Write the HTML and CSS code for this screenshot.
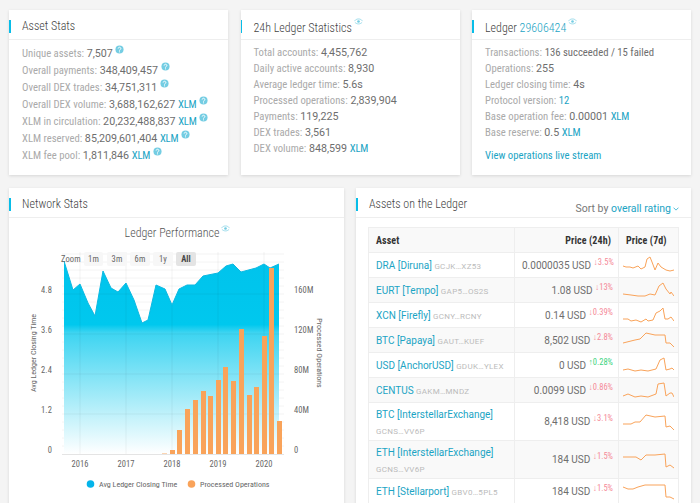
FILE: index.html
```html
<!DOCTYPE html>
<html lang="en">
<head>
<meta charset="utf-8">
<title>Stellar network dashboard</title>
<link rel="stylesheet" href="styles.css">
</head>
<body>
<svg class="defs" width="0" height="0" aria-hidden="true">
  <symbol id="help" viewBox="0 0 10 10"><circle cx="5" cy="5" r="4.5" fill="#74cde3"/><path d="M3.5 3.9a1.5 1.4 0 1 1 2.3 1.2c-.5.3-.8.5-.8 1.1" fill="none" stroke="#fff" stroke-width="1.1"/><circle cx="5" cy="7.6" r=".65" fill="#fff"/></symbol>
  <symbol id="watch" viewBox="0 0 10 8"><path d="M.6 3.2C2.8.4 7.2.4 9.4 3.2" fill="none" stroke="#74cde3" stroke-width=".8"/><path d="M.8 4.8C3 7.4 7 7.4 9.2 4.8" fill="none" stroke="#74cde3" stroke-width=".8"/><circle cx="5" cy="4" r="1.5" fill="#74cde3"/></symbol>
</svg>
<main class="page">
  <section class="top-row">
    <article class="card">
      <h2 class="card-title">Asset Stats</h2>
      <ul class="stats">
        <li><span class="lbl">Unique assets:</span> 7,507 <svg class="help"><use href="#help"/></svg></li>
        <li><span class="lbl">Overall payments:</span> 348,409,457 <svg class="help"><use href="#help"/></svg></li>
        <li><span class="lbl">Overall DEX trades:</span> 34,751,311 <svg class="help"><use href="#help"/></svg></li>
        <li><span class="lbl">Overall DEX volume:</span> 3,688,162,627 <a class="link">XLM</a> <svg class="help"><use href="#help"/></svg></li>
        <li><span class="lbl">XLM in circulation:</span> 20,232,488,837 <a class="link">XLM</a> <svg class="help"><use href="#help"/></svg></li>
        <li><span class="lbl">XLM reserved:</span> 85,209,601,404 <a class="link">XLM</a> <svg class="help"><use href="#help"/></svg></li>
        <li><span class="lbl">XLM fee pool:</span> 1,811,846 <a class="link">XLM</a> <svg class="help"><use href="#help"/></svg></li>
      </ul>
    </article>
    <article class="card">
      <h2 class="card-title">24h Ledger Statistics<svg class="watch"><use href="#watch"/></svg></h2>
      <ul class="stats">
        <li><span class="lbl">Total accounts:</span> 4,455,762</li>
        <li><span class="lbl">Daily active accounts:</span> 8,930</li>
        <li><span class="lbl">Average ledger time:</span> 5.6s</li>
        <li><span class="lbl">Processed operations:</span> 2,839,904</li>
        <li><span class="lbl">Payments:</span> 119,225</li>
        <li><span class="lbl">DEX trades:</span> 3,561</li>
        <li><span class="lbl">DEX volume:</span> 848,599 <a class="link">XLM</a></li>
      </ul>
    </article>
    <article class="card">
      <h2 class="card-title">Ledger <a class="link">29606424</a><svg class="watch"><use href="#watch"/></svg></h2>
      <ul class="stats">
        <li><span class="lbl">Transactions:</span> <span class="narrow">136 succeeded / 15 failed</span></li>
        <li><span class="lbl">Operations:</span> 255</li>
        <li><span class="lbl">Ledger closing time:</span> 4s</li>
        <li><span class="lbl">Protocol version:</span> <a class="link">12</a></li>
        <li><span class="lbl">Base operation fee:</span> 0.00001 <a class="link">XLM</a></li>
        <li><span class="lbl">Base reserve:</span> 0.5 <a class="link">XLM</a></li>
      </ul>
      <a class="link live">View operations live stream</a>
    </article>
  </section>
  <section class="bottom-row">
    <article class="card tall">
      <h2 class="card-title">Network Stats</h2>
      <svg class="chart" viewBox="9 218 335 285" width="335" height="285">
        <defs>
          <linearGradient id="area" gradientUnits="userSpaceOnUse" x1="0" y1="258" x2="0" y2="454">
            <stop offset="0" stop-color="#00c3ec"/><stop offset=".34" stop-color="#00c8ee"/><stop offset=".38" stop-color="#3cd4f1"/><stop offset="1" stop-color="#fff"/>
          </linearGradient>
        </defs>
        <text class="chart-title" x="172" y="237" text-anchor="middle">Ledger Performance</text>
        <use href="#watch" x="221" y="225" width="9" height="7"/>
        <path class="grid-minor" d="M62 262H284M62 270H284M62 278H284M62 286H284M62 302H284M62 310H284M62 318H284M62 326H284M62 342H284M62 350H284M62 358H284M62 366H284M62 382H284M62 390H284M62 398H284M62 406H284M62 422H284M62 430H284M62 438H284M62 446H284"/>
        <path class="area" d="M64 454V261L73 290 80 284 88 303 95 316 103 271 111 288 118 292 126 283 134 300 142 323 148 320 156 285 165 289 172 305 179 289 187 285 195 285 203 276 218 273 226 266 233 264 241 272 256 268 264 264 270 268 279 264V454Z"/>
        <path class="grid-major" d="M62 254H284M62 294H284M62 334H284M62 374H284M62 414H284M80 252V454M126 252V454M172 252V454M218 252V454M264 252V454"/>
        <path class="area-line" d="M64 261L73 290 80 284 88 303 95 316 103 271 111 288 118 292 126 283 134 300 142 323 148 320 156 285 165 289 172 305 179 289 187 285 195 285 203 276 218 273 226 266 233 264 241 272 256 268 264 264 270 268 279 264"/>
        <path class="baseline" d="M62 454.5H284"/>
        <g class="bars">
          <rect class="faint" x="162" y="453" width="5" height="1"/>
          <rect x="170" y="450" width="5" height="4"/>
          <rect x="177" y="430" width="5" height="24"/>
          <rect x="185" y="409" width="5" height="45"/>
          <rect x="193" y="400" width="5" height="54"/>
          <rect x="201" y="391" width="5" height="63"/>
          <rect x="208" y="396" width="5" height="58"/>
          <rect x="216" y="380" width="5" height="74"/>
          <rect x="223" y="367" width="5" height="87"/>
          <rect x="231" y="381" width="5" height="73"/>
          <rect x="239" y="329" width="5" height="125"/>
          <rect x="247" y="395" width="5" height="59"/>
          <rect x="254" y="387" width="5" height="67"/>
          <rect x="262" y="336" width="5" height="118"/>
          <rect x="269" y="268" width="5" height="186"/>
          <rect x="277" y="421" width="5" height="33"/>
        </g>
        <g class="zoom">
          <text class="axis" x="61" y="262">Zoom</text>
          <rect x="84" y="252" width="19" height="14" rx="2"/>
          <rect x="107" y="252" width="20" height="14" rx="2"/>
          <rect x="130" y="252" width="20" height="14" rx="2"/>
          <rect x="153" y="252" width="20" height="14" rx="2"/>
          <rect class="on" x="176" y="252" width="20" height="14" rx="2"/>
          <text class="axis" x="93.500" y="262" text-anchor="middle">1m</text>
          <text class="axis" x="117" y="262" text-anchor="middle">3m</text>
          <text class="axis" x="140" y="262" text-anchor="middle">6m</text>
          <text class="axis" x="163" y="262" text-anchor="middle">1y</text>
          <text class="axis bold" x="186" y="262" text-anchor="middle">All</text>
        </g>
        <g class="axis">
          <text x="52" y="292.500" text-anchor="end">4.8</text>
          <text x="52" y="332.500" text-anchor="end">3.6</text>
          <text x="52" y="372.500" text-anchor="end">2.4</text>
          <text x="52" y="412.500" text-anchor="end">1.2</text>
          <text x="52" y="453" text-anchor="end">0</text>
          <text x="294" y="292.500">160M</text>
          <text x="294" y="332.500">120M</text>
          <text x="294" y="372.500">80M</text>
          <text x="294" y="412.500">40M</text>
          <text x="294" y="453">0</text>
          <text x="80" y="467" text-anchor="middle">2016</text>
          <text x="126" y="467" text-anchor="middle">2017</text>
          <text x="172" y="467" text-anchor="middle">2018</text>
          <text x="218" y="467" text-anchor="middle">2019</text>
          <text x="264" y="467" text-anchor="middle">2020</text>
        </g>
        <g class="legend">
          <text transform="translate(36 353) rotate(-90)" text-anchor="middle">Avg Ledger Closing Time</text>
          <text transform="translate(317 353) rotate(90)" text-anchor="middle">Processed Operations</text>
          <circle cx="90.500" cy="484" r="3.800" fill="#04b4ea"/>
          <text x="99" y="487">Avg Ledger Closing Time</text>
          <circle cx="191.500" cy="484" r="3.800" fill="#f9a35a"/>
          <text x="200" y="487">Processed Operations</text>
        </g>
      </svg>
    </article>
    <article class="card tall">
      <div class="head-wrap">
        <h2 class="card-title">Assets on the Ledger</h2>
        <p class="sort">Sort by <a class="link">overall rating</a><svg class="chev" viewBox="0 0 8 5" width="6" height="4"><path d="M.7.7 4 4 7.300.7" fill="none" stroke="#19a8c9"/></svg></p>
      </div>
      <table class="assets">
        <thead>
          <tr><th class="c1">Asset</th><th class="c2">Price (24h)</th><th class="c3">Price (7d)</th></tr>
        </thead>
        <tbody>
          <tr><td><a class="link">DRA [Diruna]</a> <span class="code">GCJK…XZ53</span></td><td class="price">0.0000035 USD <sup class="down">↓3.5%</sup></td><td><svg class="spark" viewBox="0 0 51 20"><polyline points="0,11 3,12 7,12 10,13 15,11 18,14 22,12 24,4 27,2 29,7 32,15 35,8 38,12 43,15 47,16 51,15"/></svg></td></tr>
          <tr><td><a class="link">EURT [Tempo]</a> <span class="code">GAP5…OS2S</span></td><td class="price">1.08 USD <sup class="down">↓13%</sup></td><td><svg class="spark" viewBox="0 0 51 20"><polyline points="0,14 8,15 15,16 22,16 27,14 32,15 36,6 40,3 43,9 47,14 48,12 51,16"/></svg></td></tr>
          <tr><td><a class="link">XCN [Firefly]</a> <span class="code">GCNY…RCNY</span></td><td class="price">0.14 USD <sup class="down">↓0.39%</sup></td><td><svg class="spark" viewBox="0 0 51 20"><polyline points="0,14 5,14 8,16 13,15 18,17 23,14 25,16 30,15 33,8 37,6 40,3 42,14 45,14 48,12 51,16"/></svg></td></tr>
          <tr><td><a class="link">BTC [Papaya]</a> <span class="code">GAUT…KUEF</span></td><td class="price">8,502 USD <sup class="down">↓2.8%</sup></td><td><svg class="spark" viewBox="0 0 51 20"><polyline points="0,13 8,11 12,10 17,9 23,3 32,5 42,5 43,13 47,13 51,17"/></svg></td></tr>
          <tr><td><a class="link">USD [AnchorUSD]</a> <span class="code">GDUK…YLEX</span></td><td class="price">0 USD <sup class="up">↑0.28%</sup></td><td><svg class="spark" viewBox="0 0 51 20"><polyline points="0,15 5,14 12,16 18,15 25,16 33,14 37,5 41,3 43,15 47,14 49,13 51,15"/></svg></td></tr>
          <tr><td><a class="link">CENTUS</a> <span class="code">GAKM…MNDZ</span></td><td class="price">0.0099 USD <sup class="down">↓0.86%</sup></td><td><svg class="spark" viewBox="0 0 51 20"><polyline points="0,16 5,14 12,17 18,16 25,17 33,14 35,4 41,3 43,16 47,13 49,13 51,17"/></svg></td></tr>
          <tr class="two"><td><a class="link">BTC [InterstellarExchange]</a><span class="code block">GCNS…VV6P</span></td><td class="price">8,418 USD <sup class="down">↓3.1%</sup></td><td><svg class="spark" viewBox="0 0 51 20"><polyline points="0,12 8,12 12,10 17,10 23,3 32,5 42,4 43,15 47,14 51,18"/></svg></td></tr>
          <tr class="two"><td><a class="link">ETH [InterstellarExchange]</a><span class="code block">GCNS…VV6P</span></td><td class="price">184 USD <sup class="down">↓1.5%</sup></td><td><svg class="spark" viewBox="0 0 51 20"><polyline points="0,7 8,7 13,7 18,10 23,5 32,5 42,4 43,17 47,15 51,18"/></svg></td></tr>
          <tr><td><a class="link">ETH [Stellarport]</a> <span class="code">GBV0…5PL5</span></td><td class="price">184 USD <sup class="down">↓1.5%</sup></td><td><svg class="spark" viewBox="0 0 51 20"><polyline points="0,6 5,8 10,8 15,6 22,4 33,4 42,4 43,16 47,16 51,18"/></svg></td></tr>
        </tbody>
      </table>
    </article>
  </section>
</main>
</body>
</html>
```
FILE: styles.css
```css
html, body { margin: 0; padding: 0; height: 503px; overflow: hidden; }
body { background: #f4f4f4; color: #6e6e6e; font-family: Roboto, sans-serif; font-size: 10.7px; }
.defs { position: absolute; }
.page { padding: 10px 9px 0; display: flex; flex-direction: column; gap: 13px; }
.top-row { display: grid; grid-template-columns: 219px 219px 219px; column-gap: 12.5px; }
.bottom-row { display: grid; grid-template-columns: 335px 335px; column-gap: 12px; height: 330px; }
.card { background: #fff; box-shadow: 0 1px 3px rgba(0, 0, 0, .12); height: 165px; box-sizing: border-box; }
.card.tall { height: 330px; }
.card-title { margin: 0; height: 30px; box-sizing: border-box; padding: 8px 0 0 13px; border-bottom: 1px solid #eee; position: relative; font: 300 12px/17px Roboto, sans-serif; font-stretch: 75%; color: #444; white-space: nowrap; }
.card-title::before { content: ""; position: absolute; left: 0; top: 10px; width: 1.500px; height: 13px; background: #08bde8; }
.watch { width: 9px; height: 7px; vertical-align: 7px; margin-left: 2px; }
.link { color: #1ba4c4; }
.stats { list-style: none; margin: 0; padding: 5px 0 0 13px; line-height: 16px; white-space: nowrap; }
.lbl { color: #aaa; font-stretch: 87%; }
.narrow, .stats .link, .live { font-stretch: 87%; }
.stats .link { letter-spacing: -.2px; }
.help { width: 9px; height: 9px; vertical-align: 3px; }
.live { display: block; margin: 8px 0 0 13px; }
.chart { display: block; }
.chart-title { font: 300 12px Roboto, sans-serif; font-stretch: 75%; fill: #555; }
.grid-minor { stroke: #f4f4f4; fill: none; }
.grid-major { stroke: rgba(0, 0, 0, .05); fill: none; }
.area { fill: url(#area); }
.area-line { fill: none; stroke: #0cb9e2; }
.baseline { stroke: #e4e4e4; }
.bars rect { fill: #f9a35a; }
.bars .faint { fill: #fbd5b3; }
.zoom rect { fill: #f7f7f7; }
.zoom rect.on { fill: #e4e4e4; }
.axis { font: 400 8.500px Roboto, sans-serif; font-stretch: 75%; fill: #666; letter-spacing: .1px; }
.bold { font-weight: 700; fill: #444; }
.legend { font: 400 8px Roboto, sans-serif; font-stretch: 75%; fill: #666; }
.head-wrap { position: relative; }
.sort { position: absolute; right: 12px; top: 14px; margin: 0; font-size: 10.500px; line-height: 14px; color: #777; white-space: nowrap; }
.chev { margin-left: 2px; vertical-align: 1px; }
.assets { margin: 9px 0 0 12px; width: 310px; table-layout: fixed; border-collapse: collapse; white-space: nowrap; }
.assets th, .assets td { border: 1px solid #eee; box-sizing: border-box; padding: 0 0 0 7px; height: 25px; }
.assets th { background: #f9f9f9; font: 700 10px Roboto, sans-serif; font-stretch: 75%; color: #333; text-align: left; letter-spacing: .1px; }
.assets th.c1 { width: 146px; }
.assets th.c2 { width: 104px; text-align: right; padding-right: 7px; }
.assets th.c3 { width: 60px; padding-left: 7px; }
.assets td { font-size: 10px; font-stretch: 92%; }
.assets tbody tr:nth-child(even) td { background: #f9f9f9; }
.assets .two td { height: 38px; }
.assets .two td:first-child { padding-top: 3px; }
.code { color: #bbb; font-size: 8px; letter-spacing: .3px; }
.code.block { display: block; margin-top: 7px; line-height: 10px; }
.price { text-align: right; padding-right: 5px !important; font-stretch: 100% !important; }
sup { font-size: 8.500px; line-height: 0; vertical-align: 4px; font-stretch: 85%; }
.down { color: #f58a98; }
.up { color: #3ed47f; }
.spark { display: block; width: 51px; height: 20px; margin-left: -3px; }
.spark polyline { fill: none; stroke: #f9a35a; stroke-width: 1; }
```
